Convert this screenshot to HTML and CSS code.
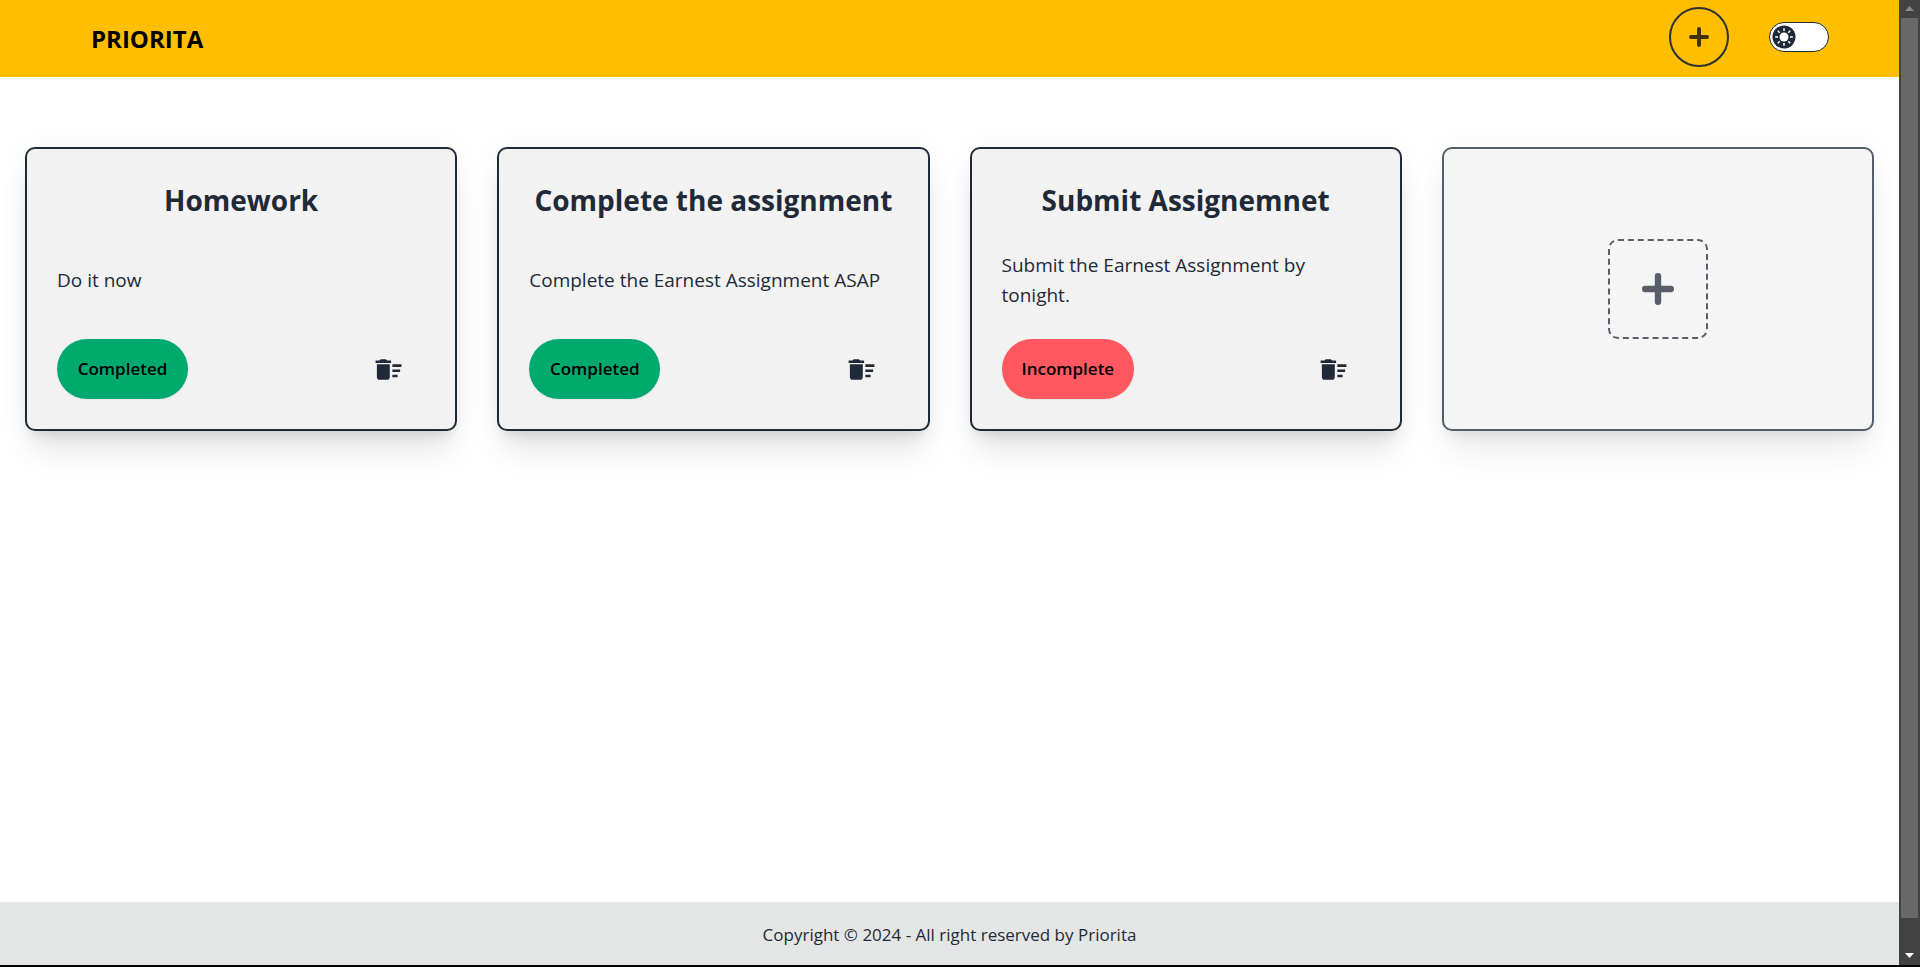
FILE: index.html
```html
<!DOCTYPE html>
<html lang="en">
<head>
<meta charset="utf-8">
<title>Priorita</title>
<link rel="stylesheet" href="styles.css">
</head>
<body>
<svg class="sprite" aria-hidden="true">
  <symbol id="plus" viewBox="0 0 32 32"><path d="M16 3.2v25.6M3.2 16h25.6" fill="none" stroke="currentColor" stroke-width="6.4" stroke-linecap="round"/></symbol>
  <symbol id="sweep" viewBox="0 0 24 24"><path fill="currentColor" d="M15 16h4v2h-4zm0-8h7v2h-7zm0 4h6v2h-6zM3 18c0 1.100.9 2 2 2h6c1.100 0 2-.9 2-2V8H3v10zM14 5h-3l-1-1H6L5 5H2v2h12z"/></symbol>
</svg>
<div class="app">
  <div class="page">
    <header class="navbar">
      <a class="brand" href="#">PRIORITA</a>
      <div class="actions">
        <button class="add" aria-label="Add task"><svg class="add-icon"><use href="#plus"/></svg></button>
        <label class="theme">
          <input class="theme-input" type="checkbox" aria-label="Dark theme">
          <svg class="theme-icon" viewBox="0 0 24 24" aria-hidden="true">
            <circle cx="12" cy="12" r="11.500" fill="#1f2937"/>
            <circle cx="12" cy="12" r="4.500" fill="#fff"/>
            <path d="M12 3.200v2.800M12 18v2.800M3.200 12H6M18 12h2.800M5.800 5.800l1.900 1.900M16.300 16.300l1.900 1.900M5.800 18.200l1.900-1.900M16.300 7.700l1.900-1.900" stroke="#fff" stroke-width="1.500"/>
          </svg>
        </label>
      </div>
    </header>
    <main class="tasks">
      <article class="card">
        <h2 class="title">Homework</h2>
        <p class="text">Do it now</p>
        <div class="row">
          <button class="status done">Completed</button>
          <button class="delete" aria-label="Delete task"><svg class="delete-icon"><use href="#sweep"/></svg></button>
        </div>
      </article>
      <article class="card">
        <h2 class="title">Complete the assignment</h2>
        <p class="text">Complete the Earnest Assignment ASAP</p>
        <div class="row">
          <button class="status done">Completed</button>
          <button class="delete" aria-label="Delete task"><svg class="delete-icon"><use href="#sweep"/></svg></button>
        </div>
      </article>
      <article class="card">
        <h2 class="title">Submit Assignemnet</h2>
        <p class="text">Submit the Earnest Assignment by tonight.</p>
        <div class="row">
          <button class="status pending">Incomplete</button>
          <button class="delete" aria-label="Delete task"><svg class="delete-icon"><use href="#sweep"/></svg></button>
        </div>
      </article>
      <article class="card card-new">
        <button class="new" aria-label="New task"><svg class="new-icon"><use href="#plus"/></svg></button>
      </article>
    </main>
    <footer class="footer"><p class="copyright">Copyright © 2024 - All right reserved by Priorita</p></footer>
  </div>
  <div class="scrollbar" aria-hidden="true">
    <svg class="arrow up" viewBox="0 0 9 5"><path d="M0 5 4.500 0 9 5z" fill="currentColor"/></svg>
    <div class="thumb"></div>
    <svg class="arrow" viewBox="0 0 9 5"><path d="M0 0h9L4.500 5z" fill="currentColor"/></svg>
  </div>
</div>
</body>
</html>
```
FILE: styles.css
```css
* { box-sizing: border-box; margin: 0; }
body {
  background: #000;
  color: #1f2937;
  font-family: "Segoe UI", "Open Sans", "Noto Sans", sans-serif;
  font-size: 19px;
  line-height: 30px;
}
button { font: inherit; color: inherit; border: 0; background: none; padding: 0; cursor: pointer; }
svg { display: block; }
.sprite { display: none; }

.app { display: flex; min-height: 100vh; border-bottom: 2px solid #000; }
.page { flex: 1; min-width: 0; display: flex; flex-direction: column; background: #fff; }

.navbar {
  display: flex;
  align-items: center;
  justify-content: space-between;
  padding: 7px 70px 10px 91px;
  background: #ffbf00;
}
.brand { color: #000; font-size: 24px; font-weight: 700; text-decoration: none; padding-top: 4px; }
.actions { display: flex; align-items: center; gap: 40px; }
.add {
  display: grid;
  place-items: center;
  width: 60px;
  height: 60px;
  border: 2px solid #2a3036;
  border-radius: 50%;
  color: #403000;
}
.add-icon { width: 20px; height: 20px; }
.theme { position: relative; display: block; width: 60px; height: 30px; cursor: pointer; }
.theme-input {
  appearance: none;
  display: block;
  margin: 0;
  width: 100%;
  height: 100%;
  border: 1px solid #1f2937;
  border-radius: 15px;
  background: #fff;
}
.theme-icon { position: absolute; top: 3px; left: 3px; width: 24px; height: 24px; }

.tasks {
  display: grid;
  grid-template-columns: repeat(4, minmax(0, 1fr));
  gap: 40px;
  padding: 70px 25px;
}
.card {
  display: flex;
  flex-direction: column;
  min-height: 284px;
  padding: 30px;
  border: 2px solid #1f2937;
  border-radius: 10px;
  background: #f2f2f2;
  box-shadow: 0 25px 31px -6px rgba(0, 0, 0, 0.1), 0 10px 12px -7px rgba(0, 0, 0, 0.1), 0 0 30px rgba(0, 0, 0, 0.04);
}
.title { font-size: 28px; font-weight: 700; line-height: 42px; text-align: center; }
.text { flex: 1; display: flex; align-items: center; font-weight: 400; }
.row { display: flex; align-items: center; justify-content: space-between; }
.status {
  min-width: 131px;
  height: 60px;
  padding: 0 20px;
  border-radius: 30px;
  color: #000;
  font-size: 17px;
  font-weight: 600;
  box-shadow: 0 1px 2px rgba(0, 0, 0, 0.05);
}
.done { background: #00a96e; }
.pending { background: #ff5861; }
.delete { padding: 14px 21px; }
.delete-icon { width: 31px; height: 31px; }
.card-new { align-items: center; justify-content: center; opacity: 0.75; }
.new {
  display: grid;
  place-items: center;
  width: 100px;
  height: 100px;
  border: 2px dashed #1f2937;
  border-radius: 10px;
}
.new-icon { width: 32px; height: 32px; }

.footer { margin-top: auto; padding: 18px 20px 15px; background: #e4e6e5; text-align: center; }
.copyright { font-size: 17px; font-weight: 400; }

.scrollbar {
  display: flex;
  flex-direction: column;
  align-items: center;
  width: 21px;
  padding: 6px 2px 7px;
  background: #424242;
  color: #fff;
}
.arrow { width: 9px; height: 5px; }
.up { color: #8b8b8b; }
.thumb { flex: 1; width: 100%; margin: 7px 0 35px; background: #686868; }
```
